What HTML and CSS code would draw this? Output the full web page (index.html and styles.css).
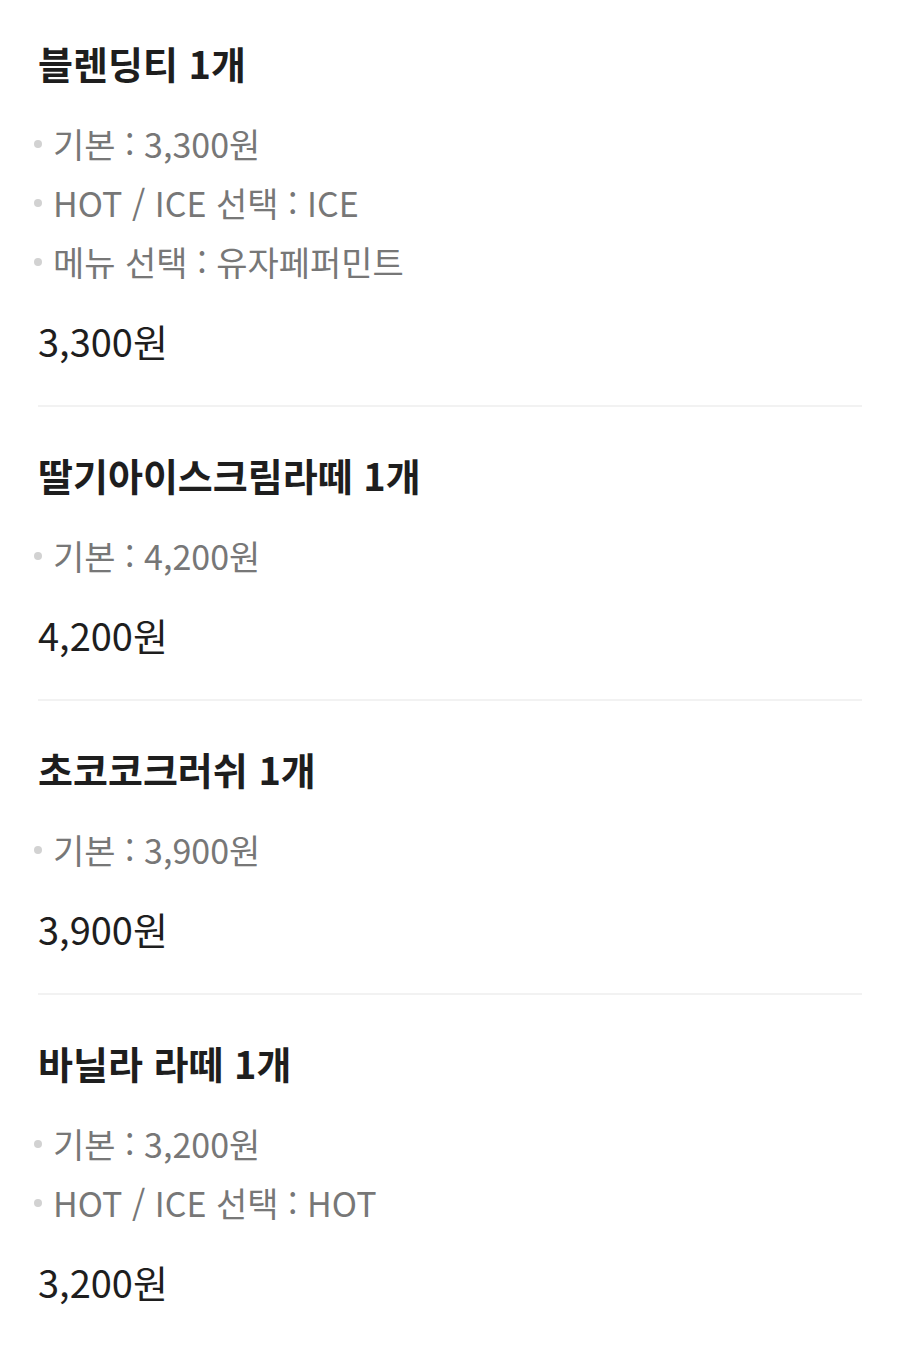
FILE: index.html
```
<!DOCTYPE html>
<html lang="ko">
<head>
  <meta charset="UTF-8" />
  <meta name="viewport" content="width=device-width, initial-scale=1.0"/>
  <title>주문 내역</title>
  <link rel="stylesheet" href="styles.css">
</head>
<body>
  <div class="order-list">

    <div class="order-item">
      <h2 class="item-name">블렌딩티 1개</h2>
      <ul class="options">
        <li>기본 : 3,300원</li>
        <li>HOT / ICE 선택 : ICE</li>
        <li>메뉴 선택 : 유자페퍼민트</li>
      </ul>
      <p class="item-price">3,300원</p>
    </div>

    <div class="order-item">
      <h2 class="item-name">딸기아이스크림라떼 1개</h2>
      <ul class="options">
        <li>기본 : 4,200원</li>
      </ul>
      <p class="item-price">4,200원</p>
    </div>

    <div class="order-item">
      <h2 class="item-name">초코코크러쉬 1개</h2>
      <ul class="options">
        <li>기본 : 3,900원</li>
      </ul>
      <p class="item-price">3,900원</p>
    </div>

    <div class="order-item">
      <h2 class="item-name">바닐라 라떼 1개</h2>
      <ul class="options">
        <li>기본 : 3,200원</li>
        <li>HOT / ICE 선택 : HOT</li>
      </ul>
      <p class="item-price">3,200원</p>
    </div>

  </div>
</body>
</html>
```

FILE: styles.css
```
body {
  margin: 0;
  background: #fff;
  font-family: "Noto Sans CJK KR", "Noto Sans", sans-serif;
  color: #222;
}

.order-list {
  padding: 0 38px;
}

.order-item {
  padding: 40px 0 36px;
  border-bottom: 2px solid #f2f2f2;
}

.order-item:first-child {
  padding-top: 35px;
}

.order-item:last-child {
  border-bottom: none;
}

.item-name {
  margin: 0;
  font-size: 38px;
  font-weight: 700;
  line-height: 56px;
  color: #1e1e1e;
}

.options {
  list-style: none;
  margin: 23px 0 0;
  padding: 0;
}

.options li {
  position: relative;
  padding-left: 15px;
  font-size: 34px;
  line-height: 59px;
  color: #777;
}

.options li::before {
  content: "";
  position: absolute;
  left: -4px;
  top: 26px;
  width: 8px;
  height: 8px;
  border-radius: 50%;
  background: #d2d2d2;
}

.item-price {
  margin: 22px 0 0;
  font-size: 38px;
  line-height: 56px;
  color: #1e1e1e;
}
```
